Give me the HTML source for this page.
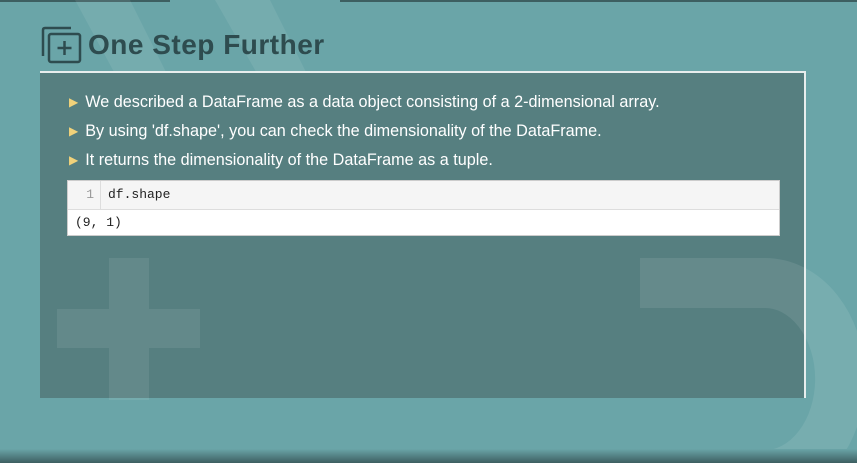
<!DOCTYPE html>
<html><head><meta charset="utf-8"><style>
*{margin:0;padding:0;box-sizing:border-box}
body{width:857px;height:463px;overflow:hidden;background:#6aa5a8;position:relative;font-family:"Liberation Sans",sans-serif}
.abs{position:absolute}
.bar{left:0;top:0;height:2px;background:#3d5f61}
.panel{left:40px;top:71px;width:766px;height:327px;background:#567f80;border-top:2px solid #e8eeee;border-right:2px solid #e8eeee}
.li{position:absolute;left:69px;color:#fff;font-size:16.2px;white-space:nowrap}
.li span{color:#f1d27a;font-size:12px;margin-right:7px;position:relative;top:-1px}
.code{left:67px;top:180px;width:713px;height:56px;background:#fff;border:1px solid #ccc;font-family:"Liberation Mono",monospace;font-size:13px}
.in{height:29px;background:#f5f5f5;border-bottom:1px solid #ddd;position:relative}
</style></head><body>
<div class="abs bar" style="width:170px"></div>
<div class="abs bar" style="left:340px;width:517px"></div>
<svg class="abs" style="left:0;top:0" width="857" height="463">
<polygon points="75,0 130,0 250,240 205,240" fill="#ffffff" opacity="0.08"/>
<polygon points="215,0 270,0 340,140 295,140" fill="#ffffff" opacity="0.08"/>
</svg>
<div class="abs panel"></div>
<svg class="abs" style="left:0;top:0" width="857" height="463">
<rect x="109" y="258" width="40" height="142" fill="#ffffff" opacity="0.08"/>
<rect x="57" y="309" width="52" height="39" fill="#ffffff" opacity="0.08"/>
<rect x="149" y="309" width="51" height="39" fill="#ffffff" opacity="0.08"/>
<path d="M640 283 H765 A72 92 0 0 1 765 475 H640" fill="none" stroke="#ffffff" stroke-width="50" opacity="0.09"/>
</svg>
<svg class="abs" style="left:40px;top:26px" width="44" height="40">
<path d="M3 30 V4 Q3 2 5 2 H31" fill="none" stroke="#2e4c4f" stroke-width="2.5"/>
<rect x="9" y="8" width="31" height="28" rx="2" fill="none" stroke="#2e4c4f" stroke-width="2.5"/>
<path d="M24.5 15 V29 M17.5 22 H31.5" stroke="#2e4c4f" stroke-width="2.5"/>
</svg>
<div class="abs" style="left:88px;top:29px;font-size:28px;font-weight:bold;color:#2e4c4f;letter-spacing:0.5px">One Step Further</div>
<div class="li" style="top:93px"><span>&#9654;</span>We described a DataFrame as a data object consisting of a 2-dimensional array.</div>
<div class="li" style="top:122px"><span>&#9654;</span>By using 'df.shape', you can check the dimensionality of the DataFrame.</div>
<div class="li" style="top:151px"><span>&#9654;</span>It returns the dimensionality of the DataFrame as a tuple.</div>
<div class="abs code">
<div class="in"><span class="abs" style="left:0;top:0;width:33px;height:28px;border-right:1px solid #ddd;text-align:right;padding-right:6px;line-height:28px;color:#999">1</span><span class="abs" style="left:40px;line-height:28px;color:#222">df.shape</span></div>
<div style="padding-left:7px;line-height:25px;color:#222">(9, 1)</div>
</div>
<div class="abs" style="left:0;top:449px;width:857px;height:14px;background:linear-gradient(#6aa5a8,#3d5f61)"></div>
</body></html>
